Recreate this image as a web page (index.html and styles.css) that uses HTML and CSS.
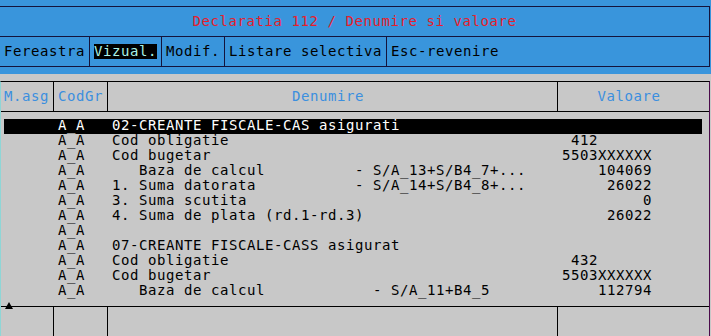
FILE: index.html
```html
<!DOCTYPE html>
<html lang="ro">
<head>
    <meta charset="UTF-8">
    <meta name="viewport" content="width=device-width, initial-scale=1.0">
    <title>Declaratia 112 / Denumire si valoare</title>
    <link rel="stylesheet" href="styles.css">
</head>
<body>

    <div class="topbar">
        <div class="title">Declaratia 112 / Denumire si valoare</div>
        <div class="menu">
            <span class="item">Fereastra</span>
            <span class="item"><span class="sel">Vizual.</span></span>
            <span class="item">Modif.</span>
            <span class="item">Listare selectiva</span>
            <span class="item last">Esc-revenire</span>
        </div>
    </div>

    <div class="list">
        <div class="list-box">
            <div class="cols head">
                <div class="cell c-asg">M.asg</div>
                <div class="cell c-grp">CodGr</div>
                <div class="cell c-name">Denumire</div>
                <div class="cell c-val">Valoare</div>
            </div>

            <div class="rows">
                <div class="row current"><span class="grp">A_A</span><span class="name wide">02-CREANTE FISCALE-CAS asigurati</span><span class="val"></span></div>
                <div class="row"><span class="grp">A_A</span><span class="name wide">Cod obligatie</span><span class="val code"> 412</span></div>
                <div class="row"><span class="grp">A_A</span><span class="name wide">Cod bugetar</span><span class="val code">5503XXXXXX</span></div>
                <div class="row"><span class="grp">A_A</span><span class="name">   Baza de calcul</span><span class="formula">- S/A_13+S/B4_7+...</span><span class="val">104069</span></div>
                <div class="row"><span class="grp">A_A</span><span class="name">1. Suma datorata</span><span class="formula">- S/A_14+S/B4_8+...</span><span class="val">26022</span></div>
                <div class="row"><span class="grp">A_A</span><span class="name wide">3. Suma scutita</span><span class="val">0</span></div>
                <div class="row"><span class="grp">A_A</span><span class="name wide">4. Suma de plata (rd.1-rd.3)</span><span class="val">26022</span></div>
                <div class="row"><span class="grp">A_A</span><span class="name wide"></span><span class="val"></span></div>
                <div class="row"><span class="grp">A_A</span><span class="name wide">07-CREANTE FISCALE-CASS asigurat</span><span class="val"></span></div>
                <div class="row"><span class="grp">A_A</span><span class="name wide">Cod obligatie</span><span class="val code"> 432</span></div>
                <div class="row"><span class="grp">A_A</span><span class="name wide">Cod bugetar</span><span class="val code">5503XXXXXX</span></div>
                <div class="row"><span class="grp">A_A</span><span class="name">   Baza de calcul</span><span class="formula">  - S/A_11+B4_5</span><span class="val">112794</span></div>
            </div>

            <div class="cols foot">
                <span class="arrow"></span>
                <div class="cell c-asg"></div>
                <div class="cell c-grp"></div>
                <div class="cell c-name"></div>
                <div class="cell c-val"></div>
            </div>
        </div>
    </div>

</body>
</html>
```

FILE: styles.css
```css
* {
    margin: 0;
    padding: 0;
    box-sizing: border-box;
}

/* console grid: every character cell is 9px wide, 15px high */
body {
    font-family: 'DejaVu Sans Mono', monospace;
    font-size: 14px;
    letter-spacing: 0.57px;
    line-height: 15px;
    background-color: #c8c8c8;
    color: #000;
    width: 711px;
    height: 336px;
    overflow: hidden;
}

/* blue window header */
.topbar {
    background-color: #3995dc;
    padding: 6px 0 7px 0;
}

.title {
    height: 31px;
    margin-right: 1px;
    border-top: 1px solid #14143c;
    border-right: 1px solid #14143c;
    border-bottom: 1px solid #14143c;
    padding-top: 7px;
    text-align: center;
    color: #e41e2c;
    white-space: pre;
}

.menu {
    display: flex;
    height: 30px;
    margin-right: 1px;
    border-right: 1px solid #14143c;
    border-bottom: 1px solid #14143c;
}

.item {
    display: flex;
    align-items: center;
    padding: 0 4px;
    border-right: 1px solid #14143c;
    color: #000;
}

.item.last {
    border-right: none;
}

.sel {
    background-color: #000;
    color: #aaf2e6;
}

/* grey list */
.list {
    padding-top: 7px;
    height: 262px;
}

.list-box {
    margin-right: 1px;
    height: 100%;
    border-top: 1px solid #000;
    border-left: 1px solid #8fd6d6;
    border-right: 1px solid #4a0a4a;
    display: flex;
    flex-direction: column;
}

.cols {
    display: grid;
    grid-template-columns: 53px 54px 450px 151px;
}

.cell {
    border-right: 1px solid #000;
    white-space: pre;
}

.cell.c-val {
    border-right: none;
}

.head {
    height: 30px;
    border-bottom: 1px solid #000;
    color: #3b8fdf;
}

.head .cell {
    padding-top: 7px;
}

.head .c-asg {
    padding-left: 3px;
}

.head .c-grp {
    padding-left: 4px;
}

.head .c-name,
.head .c-val {
    text-align: center;
    padding-right: 9px;
}

.rows {
    padding: 7px 0;
    border-bottom: 1px solid #000;
}

.row {
    display: flex;
    height: 15px;
    line-height: 12px;
    width: 698px;
    margin-left: 3px;
    white-space: pre;
}

.row.current {
    background-color: #000;
    color: #fff;
}

.grp {
    flex-shrink: 0;
    width: 108px;
    padding-left: 54px;
}

.name {
    flex-shrink: 0;
    width: 243px;
}

.name.wide {
    width: 450px;
}

.formula {
    flex-shrink: 0;
    width: 207px;
}

.val {
    flex-shrink: 0;
    width: 90px;
    text-align: right;
}

.val.code {
    text-align: left;
}

.foot {
    flex: 1;
    position: relative;
}

.arrow {
    position: absolute;
    left: 4px;
    top: -5px;
    width: 0;
    height: 0;
    border-left: 4px solid transparent;
    border-right: 4px solid transparent;
    border-bottom: 7px solid #000;
}
```
